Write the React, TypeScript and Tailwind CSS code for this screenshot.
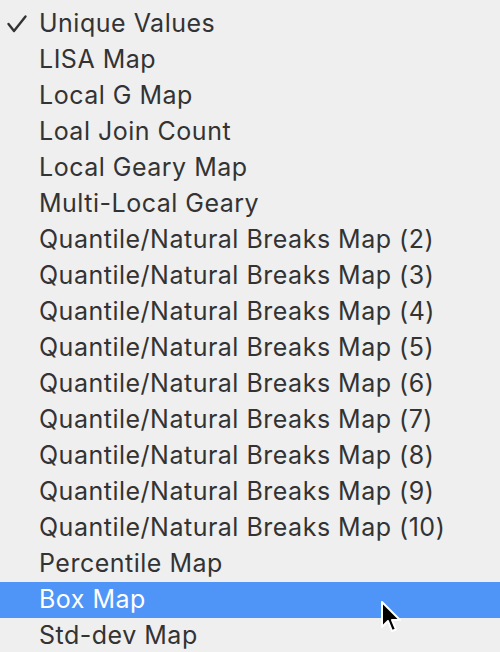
const items = [
  'Unique Values',
  'LISA Map',
  'Local G Map',
  'Loal Join Count',
  'Local Geary Map',
  'Multi-Local Geary',
  'Quantile/Natural Breaks Map (2)',
  'Quantile/Natural Breaks Map (3)',
  'Quantile/Natural Breaks Map (4)',
  'Quantile/Natural Breaks Map (5)',
  'Quantile/Natural Breaks Map (6)',
  'Quantile/Natural Breaks Map (7)',
  'Quantile/Natural Breaks Map (8)',
  'Quantile/Natural Breaks Map (9)',
  'Quantile/Natural Breaks Map (10)',
  'Percentile Map',
  'Box Map',
  'Std-dev Map',
]

function Check() {
  return (
    <svg width="39" height="36" viewBox="0 0 39 36" aria-hidden="true">
      <path d="M8.5 18 L14 25 L25.5 10.5" fill="none" stroke="#333" strokeWidth="2.4" strokeLinecap="round" strokeLinejoin="round" />
    </svg>
  )
}

function Cursor() {
  return (
    <svg className="absolute left-[378px] top-[18px]" width="26" height="36" viewBox="0 0 26 36" aria-hidden="true">
      <path
        d="M4 2 L4 27 L10 21 L14 31 L18 29.5 L14 20 L22 20 Z"
        fill="#000"
        stroke="#fff"
        strokeWidth="2"
        strokeLinejoin="round"
      />
    </svg>
  )
}

export default function App() {
  return (
    <div className="h-[652px] w-[500px] overflow-hidden bg-[#efefef] pt-[6px] font-['Inter','Noto_Sans',sans-serif] text-[25px] tracking-[0.5px] text-[#333333]">
      {items.map((label, i) => {
        const checked = i === 0
        const active = label === 'Box Map'
        return (
          <div
            key={label}
            className={
              active
                ? 'relative flex h-9 items-center bg-[#4f94f7] text-white'
                : 'relative flex h-9 items-center'
            }
          >
            <span className="flex h-9 w-[39px] shrink-0">{checked && <Check />}</span>
            <span className="whitespace-nowrap">{label}</span>
            {active && <Cursor />}
          </div>
        )
      })}
    </div>
  )
}
